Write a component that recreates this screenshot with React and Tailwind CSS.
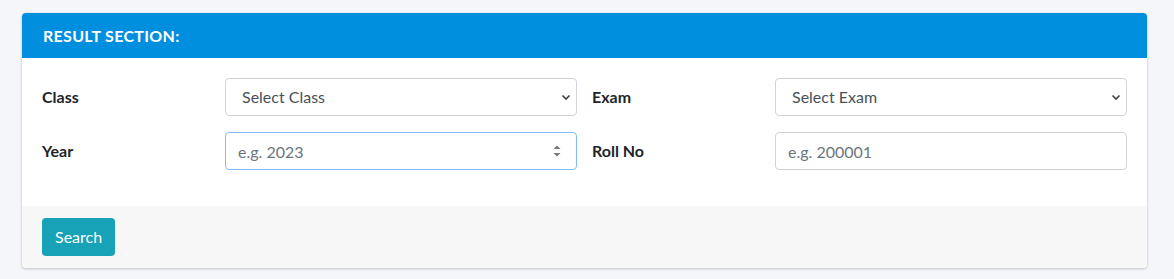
import React from 'react';

const font = { fontFamily: 'Lato, "Noto Sans", sans-serif' };

const Chevron = () => (
  <svg className="pointer-events-none absolute right-[5px] top-1/2 -translate-y-1/2" width="12" height="12" viewBox="0 0 12 12">
    <path d="M2.5 4.5 L6 8 L9.5 4.5" fill="none" stroke="#444" strokeWidth="1.7" />
  </svg>
);

const Spinner = () => (
  <svg className="pointer-events-none absolute right-[15px] top-1/2 -translate-y-1/2" width="10" height="14" viewBox="0 0 10 14">
    <path d="M1.5 5 L5 1.5 L8.5 5 Z" fill="#777" />
    <path d="M1.5 9 L5 12.5 L8.5 9 Z" fill="#777" />
  </svg>
);

const SelectBox = ({ label }) => (
  <div className="relative">
    <select className="w-full h-[38px] appearance-none rounded-[4px] border border-[#ced4da] bg-white px-[16px] text-[16px] text-[#495057] outline-none">
      <option>{label}</option>
    </select>
    <Chevron />
  </div>
);

const App = () => {
  return (
    <div className="min-h-[279px] bg-[#f4f6f9] pt-[13px] px-[22px]" style={font}>
      <div className="w-[1125px] rounded-[4px] bg-white overflow-hidden shadow-[0_0_1px_rgba(0,0,0,0.125),0_1px_3px_rgba(0,0,0,0.2)]">
        {/* Header */}
        <div className="h-[45px] bg-[#008ede] px-[21px] flex items-center">
          <h3 className="text-[16px] font-bold text-white tracking-[0.3px]">RESULT SECTION:</h3>
        </div>

        {/* Body */}
        <div className="px-[20px] pt-[20px] pb-[36px]">
          <div className="grid grid-cols-[168px_352px_168px_352px] gap-x-[15px] gap-y-[16px] items-center">
            <label className="text-[16px] font-bold text-[#212529]">Class</label>
            <SelectBox label="Select Class" />
            <label className="text-[16px] font-bold text-[#212529]">Exam</label>
            <SelectBox label="Select Exam" />

            <label className="text-[16px] font-bold text-[#212529]">Year</label>
            <div className="relative">
              <input
                type="text"
                placeholder="e.g. 2023"
                className="w-full h-[38px] rounded-[4px] border border-[#80bdff] bg-white px-[12px] text-[16px] text-[#495057] placeholder:text-[#6c757d] outline-none"
              />
              <Spinner />
            </div>
            <label className="text-[16px] font-bold text-[#212529]">Roll No</label>
            <input
              type="text"
              placeholder="e.g. 200001"
              className="w-full h-[38px] rounded-[4px] border border-[#ced4da] bg-white px-[12px] text-[16px] text-[#495057] placeholder:text-[#6c757d] outline-none"
            />
          </div>
        </div>

        {/* Footer */}
        <div className="bg-[#f7f7f7] px-[20px] py-[12px]">
          <button className="h-[38px] rounded-[4px] bg-[#17a2b8] px-[13px] text-[16px] text-white">
            Search
          </button>
        </div>
      </div>
    </div>
  );
};

export default App;
